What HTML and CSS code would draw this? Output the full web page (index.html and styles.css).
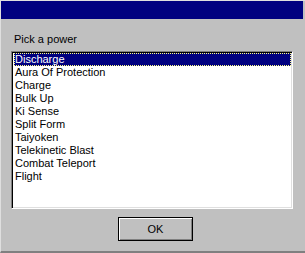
FILE: index.html
```html
<!DOCTYPE html>
<html lang="en">
<head>
  <meta charset="UTF-8">
  <title>Pick a power</title>
  <link rel="stylesheet" href="styles.css">
</head>
<body>
  <div class="window">
    <div class="titlebar"></div>
    <div class="content">
      <div class="label">Pick a power</div>
      <ul class="listbox">
        <li class="selected">Discharge</li>
        <li>Aura Of Protection</li>
        <li>Charge</li>
        <li>Bulk Up</li>
        <li>Ki Sense</li>
        <li>Split Form</li>
        <li>Taiyoken</li>
        <li>Telekinetic Blast</li>
        <li>Combat Teleport</li>
        <li>Flight</li>
      </ul>
      <div class="buttons">
        <button class="btn">OK</button>
      </div>
    </div>
  </div>
</body>
</html>
```
FILE: styles.css
```css
body {
  margin: 0;
  background-color: #c0c0c0;
  font-family: "Liberation Sans", Arial, sans-serif;
  font-size: 11px;
}

.window {
  width: 305px;
  height: 253px;
  box-sizing: border-box;
  border-top: 1px solid #dfdfdf;
  border-left: 1px solid #dfdfdf;
  border-bottom: 2px solid #808080;
  background-color: #c0c0c0;
  display: flex;
  flex-direction: column;
}

.titlebar {
  height: 18px;
  margin: 0 2px 0 0;
  background-color: #000080;
}

.content {
  padding: 14px 12px 0 10px;
}

.label {
  line-height: 13px;
  margin-left: 3px;
  color: #000;
}

.listbox {
  list-style: none;
  margin: 5px 0 0 0;
  padding: 0;
  height: 154px;
  background: #fff;
  border-top: 1px solid #808080;
  border-left: 1px solid #808080;
  border-right: 1px solid #fff;
  border-bottom: 1px solid #fff;
  box-shadow: inset 1px 1px 0 #000, inset -1px -1px 0 #dfdfdf;
  padding: 1px;
}

.listbox li {
  height: 13px;
  line-height: 13px;
  padding-left: 2px;
  color: #000;
  white-space: nowrap;
}

.listbox li.selected {
  background: #000080;
  color: #fff;
  outline: 1px dotted #ffff80;
  outline-offset: -1px;
  padding-left: 1px;
  margin-left: 1px;
}

.buttons {
  padding: 8px 0 0 107px;
}

.btn {
  width: 75px;
  height: 24px;
  background: #c0c0c0;
  font-family: "Liberation Sans", Arial, sans-serif;
  font-size: 11px;
  color: #000;
  border: 1px solid #000;
  box-shadow: inset 1px 1px 0 #fff, inset -1px -1px 0 #808080;
  padding: 0;
}
```
